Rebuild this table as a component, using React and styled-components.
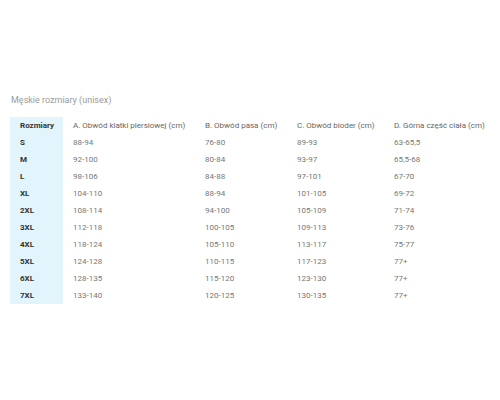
import React from "react";
import styled, { createGlobalStyle } from "styled-components";

const Global = createGlobalStyle`
  html, body { margin: 0; padding: 0; background: #fff; }
  body { font-family: Roboto, "Liberation Sans", sans-serif; }
`;

const Page = styled.div`
  padding: 93px 10px 0 10px;
`;

const Title = styled.div`
  font-size: 9px;
  line-height: 14px;
  color: #9a9a9a;
  font-weight: 400;
  padding-left: 1px;
  margin-bottom: 10px;
`;

const Table = styled.table`
  border-collapse: collapse;
  table-layout: fixed;
  width: 480px;
  font-size: 8px;
`;

const Col = styled.col`
  width: ${(p) => p.$w}px;
`;

const Row = styled.tr`
  height: 17px;
`;

const SizeCell = styled.td`
  background: #e2f4fc;
  padding: 0 0 0 10px;
  font-weight: 700;
  color: #333;
  vertical-align: middle;
  white-space: nowrap;
`;

const Cell = styled.td`
  padding: 0 0 0 10px;
  color: ${(p) => (p.$head ? "#666" : "#777")};
  font-weight: 400;
  vertical-align: middle;
  white-space: nowrap;
`;

const headers = [
  "A. Obwód klatki piersiowej (cm)",
  "B. Obwód pasa (cm)",
  "C. Obwód bioder (cm)",
  "D. Górna część ciała (cm)",
];

const rows = [
  ["S", "88-94", "76-80", "89-93", "63-65,5"],
  ["M", "92-100", "80-84", "93-97", "65,5-68"],
  ["L", "98-106", "84-88", "97-101", "67-70"],
  ["XL", "104-110", "88-94", "101-105", "69-72"],
  ["2XL", "108-114", "94-100", "105-109", "71-74"],
  ["3XL", "112-118", "100-105", "109-113", "73-76"],
  ["4XL", "118-124", "105-110", "113-117", "75-77"],
  ["5XL", "124-128", "110-115", "117-123", "77+"],
  ["6XL", "128-135", "115-120", "123-130", "77+"],
  ["7XL", "133-140", "120-125", "130-135", "77+"],
];

export default function App() {
  return (
    <Page>
      <Global />
      <Title>Męskie rozmiary (unisex)</Title>
      <Table>
        <colgroup>
          <Col $w={53} />
          <Col $w={132} />
          <Col $w={92} />
          <Col $w={97} />
          <Col $w={106} />
        </colgroup>
        <tbody>
          <Row>
            <SizeCell>Rozmiary</SizeCell>
            {headers.map((h) => (
              <Cell key={h} $head>
                {h}
              </Cell>
            ))}
          </Row>
          {rows.map((r) => (
            <Row key={r[0]}>
              <SizeCell>{r[0]}</SizeCell>
              {r.slice(1).map((v, i) => (
                <Cell key={i}>{v}</Cell>
              ))}
            </Row>
          ))}
        </tbody>
      </Table>
    </Page>
  );
}
